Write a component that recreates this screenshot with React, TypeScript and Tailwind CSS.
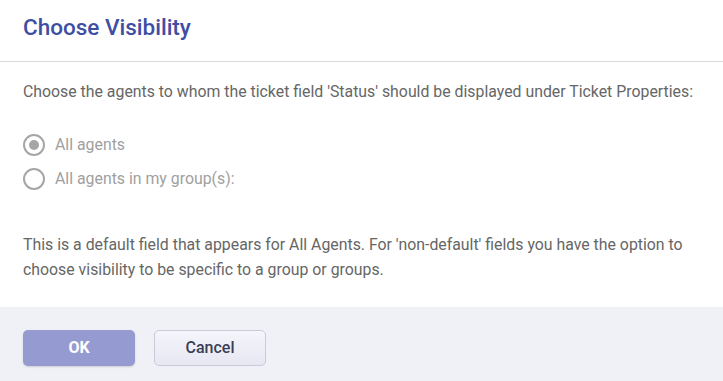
import React from "react";

export default function App() {
  return (
    <div className="w-[723px] h-[381px] bg-white flex flex-col font-['Roboto',sans-serif] overflow-hidden">
      <div className="h-[62px] border-b border-[#d9d9d9] flex items-center px-[23px] shrink-0">
        <h1 className="text-[22.5px] font-medium text-[#3e4fa3] leading-none -mt-[6px]">Choose Visibility</h1>
      </div>
      <div className="flex-1 px-[23px] pt-[18px]">
        <p className="text-[15.85px] text-[#666] leading-[24px]">
          Choose the agents to whom the ticket field 'Status' should be displayed under Ticket Properties:
        </p>
        <div className="mt-[30px] flex flex-col gap-[12px]">
          <label className="flex items-center gap-[10px] text-[15.85px] text-[#a0a0a0] leading-[22px]">
            <span className="w-[22px] h-[22px] rounded-full border-2 border-[#a6a6a6] flex items-center justify-center">
              <span className="w-[10px] h-[10px] rounded-full bg-[#a6a6a6]" />
            </span>
            All agents
          </label>
          <label className="flex items-center gap-[10px] text-[15.85px] text-[#a0a0a0] leading-[22px]">
            <span className="w-[22px] h-[22px] rounded-full border-2 border-[#a6a6a6]" />
            All agents in my group(s):
          </label>
        </div>
        <p className="mt-[42px] text-[15.85px] text-[#666] leading-[25px]">
          This is a default field that appears for All Agents. For 'non-default' fields you have the option to choose visibility to be specific to a group or groups.
        </p>
      </div>
      <div className="h-[74px] bg-[#f0f1f7] flex items-start pt-[23px] px-[23px] gap-[19px] shrink-0">
        <button className="w-[112px] h-[36px] rounded-[5px] bg-[#959bd0] text-white text-[16px] font-bold shadow-[0_1px_2px_rgba(0,0,0,0.15)]">
          OK
        </button>
        <button className="w-[112px] h-[36px] rounded-[5px] bg-gradient-to-b from-[#f5f6fb] to-[#e6e7f1] border border-[#c9cbdb] text-[#3b3d54] text-[16px] font-medium">
          Cancel
        </button>
      </div>
    </div>
  );
}
